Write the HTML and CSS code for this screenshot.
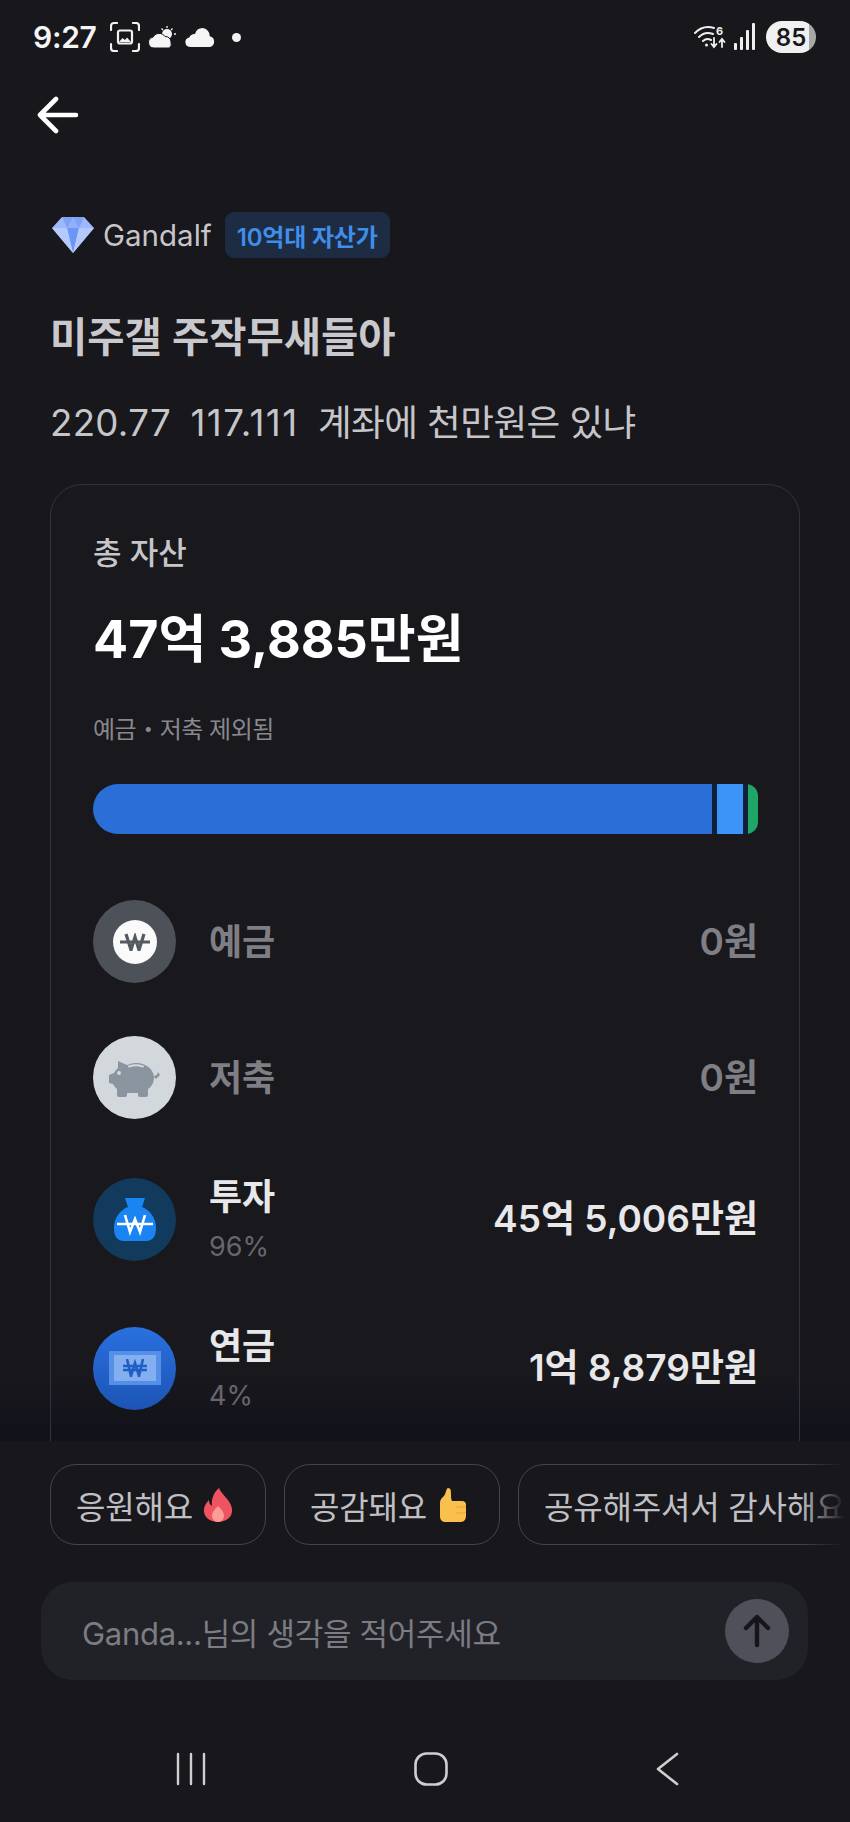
FILE: index.html
```html
<!DOCTYPE html>
<html lang="ko">
<head>
<meta charset="utf-8">
<title>Gandalf</title>
<link rel="stylesheet" href="styles.css">
</head>
<body>
<div class="screen">
  <div class="status">
    <div class="status-left">
      <span class="time">9:27</span>
      <svg class="st-shot" viewBox="0 0 30 30" width="30" height="30" fill="none" stroke="#f2f2f2" stroke-width="2.200" stroke-linecap="round"><path d="M1 8V4a3 3 0 0 1 3-3h3M23 1h3a3 3 0 0 1 3 3v4M29 22v4a3 3 0 0 1-3 3h-3M7 29H4a3 3 0 0 1-3-3v-4"/><rect x="8" y="8.500" width="14" height="13" rx="2"/><path d="M9 20l3.500-4 2.500 2 2-2.500 4 4.500z" fill="#f2f2f2" stroke="none"/></svg>
      <svg class="st-sun" viewBox="0 0 28 24" width="28" height="24" fill="#f5f5f5"><circle cx="19" cy="9" r="5"/><path d="M19 1v2M26 9h2M24.500 3.500l-1.500 1.500M13.500 3.500l1.500 1.500" stroke="#f5f5f5" stroke-width="1.300"/><path d="M6 23a5.500 5.500 0 0 1-1-10.900A7 7 0 0 1 17 11.500a5.500 5.500 0 0 1 6 5.700A5.600 5.600 0 0 1 21.500 23z" stroke="#17171c" stroke-width="1"/></svg>
      <svg class="st-cloud" viewBox="0 0 30 20" width="30" height="20" fill="#f5f5f5"><path d="M5 20a4.800 4.800 0 0 1-.8-9.500A6 6 0 0 1 10 7 8 8 0 0 1 17.500 1 8 8 0 0 1 24.800 9.300 5.500 5.500 0 0 1 25 20z"/></svg>
      <span class="st-dot"></span>
    </div>
    <div class="status-right">
      <svg class="st-wifi" viewBox="0 0 32 26" width="32" height="26" fill="none" stroke="#eee" stroke-width="2" stroke-linecap="round"><path d="M1 9a19 19 0 0 1 19-5M5 13a13 13 0 0 1 14-3M9 17a7 7 0 0 1 8-1"/><circle cx="12.500" cy="21" r="1.500" fill="#eee" stroke="none"/><path d="M20 14v8M17.500 20l2.500 3 2.500-3M28 23v-7M25.500 18l2.500-3 2.500 3" stroke-width="1.800"/><text x="22" y="11" class="wifi-six">6</text></svg>
      <svg class="st-signal" viewBox="0 0 22 30" width="22" height="30" fill="#eee"><rect x="0" y="21" width="3" height="7" rx="1"/><rect x="6" y="15" width="3" height="13" rx="1"/><rect x="12" y="8" width="3" height="20" rx="1"/><rect x="18" y="1" width="3" height="27" rx="1"/></svg>
      <span class="battery">85</span>
    </div>
  </div>

  <div class="topbar">
    <svg class="back" viewBox="0 0 42 38" width="42" height="38" fill="none" stroke="#fff" stroke-width="4.600" stroke-linecap="round" stroke-linejoin="round"><path d="M3 19h36M19 3L3 19l16 16"/></svg>
  </div>

  <div class="scroll">
    <div class="author">
      <svg class="gem" viewBox="0 0 42 36" width="42" height="36"><path d="M10 0h22l10 11-21 25L0 11z" fill="#9db8fb"/><path d="M10 0h22l-5 11H15z" fill="#7ea2f7"/><path d="M15 11h12L21 36z" fill="#6a96f7"/><path d="M0 11h15l6 25z" fill="#b4cafd"/><path d="M42 11H27l-6 25z" fill="#b4cafd"/><path d="M21 0l6 11H15z" fill="#92b0f9"/></svg>
      <span class="author-name">Gandalf</span>
      <span class="badge">10억대 자산가</span>
    </div>
    <h1 class="title">미주갤 주작무새들아</h1>
    <p class="body-text"><span class="num-a">220.77</span>&nbsp; <span class="num-b">117.111</span>&nbsp; 계좌에 천만원은 있냐</p>

    <section class="card">
      <div class="card-label">총 자산</div>
      <div class="card-total">47억 3,885만원</div>
      <div class="card-note">예금・저축 제외됨</div>
      <div class="bar">
        <span class="seg seg-a"></span>
        <span class="seg seg-b"></span>
        <span class="seg seg-c"></span>
      </div>

      <div class="row row-muted row-first">
        <span class="ico ico-grey"><span class="won-disc"><svg viewBox="0 0 30 18" width="30" height="18" fill="none" stroke="#555a61" stroke-width="3.200"><path d="M0 9h30M6 1l5 16 4-13 4 13 5-16"/></svg></span></span>
        <span class="row-main"><span class="row-name">예금</span></span>
        <span class="row-value">0원</span>
      </div>
      <div class="row row-muted row-second">
        <span class="ico ico-light"><svg viewBox="0 0 52 40" width="52" height="40"><path d="M9 3l9 4a22 22 0 0 1 9-2c11 0 18 7 18 15 0 5-3 9-6 11v6a2 2 0 0 1-2 2h-6a2 2 0 0 1-2-2v-2H18v2a2 2 0 0 1-2 2h-6a2 2 0 0 1-2-2v-6c-2-2-3-3-4-5l-4-1v-8l5-2c1-2 2-3 4-5z" fill="#8b959f"/><path d="M20 8.500c4-1.500 10-1.500 14 0" stroke="#d4d9de" stroke-width="2" fill="none" stroke-linecap="round"/><path d="M44 18c3 0 4-1 5-4l2 3-4 4z" fill="#8b959f"/><circle cx="10" cy="15" r="2" fill="#d4d9de"/></svg></span>
        <span class="row-main"><span class="row-name">저축</span></span>
        <span class="row-value">0원</span>
      </div>
      <div class="row row-third">
        <span class="ico ico-navy"><svg viewBox="0 0 44 44" width="44" height="44"><path d="M12 1h20l-3 9c8 3 14 11 14 21 0 8-3 13-10 13H11C4 44 1 39 1 31 1 21 7 13 15 10z" fill="#1a85f2"/><path d="M4 27h36M12 18l5 17 5-13 5 13 5-17" fill="none" stroke="#fff" stroke-width="2.600"/></svg></span>
        <span class="row-main"><span class="row-name">투자</span><span class="row-pct">96%</span></span>
        <span class="row-value">45억 5,006만원</span>
      </div>
      <div class="row row-fourth">
        <span class="ico ico-blue"><span class="note"><span class="note-in"><svg viewBox="0 0 24 18" width="24" height="18" fill="none" stroke="#1f5fc4" stroke-width="2.600"><path d="M0 7h24M0 11h24M4 0l4 17 4-13 4 13 4-17"/></svg></span></span></span>
        <span class="row-main"><span class="row-name">연금</span><span class="row-pct">4%</span></span>
        <span class="row-value">1억 8,879만원</span>
      </div>
    </section>
  </div>

  <div class="panel">
    <div class="chips">
      <span class="chip">응원해요 <svg class="emoji" viewBox="0 0 30 34" width="30" height="34"><path d="M16 0c2 6 12 12 13 21 1 8-6 13-14 13S0 29 1 21c.5-4 3-7 5-9 0 3 1 5 3 6C8 11 11 4 16 0z" fill="#ef5361"/><path d="M15 18c3 3 6 6 6 10 0 3-3 6-6 6s-6-3-6-6c0-4 3-7 6-10z" fill="#fb9d96"/></svg></span>
      <span class="chip">공감돼요 <svg class="emoji" viewBox="0 0 30 34" width="30" height="34"><path d="M11 0c3 0 3 3 3 6 0 3 0 5 1 7h10c3 0 4 2 4 4v11c0 3-2 6-5 6H9c-4 0-6-2-6-6V15c0-3 1-4 3-6 3-2 3-9 5-9z" fill="#f9c04e"/><path d="M19 19h10M19 25h10" stroke="#e6a835" stroke-width="1"/></svg></span>
      <span class="chip chip-cut">공유해주셔서 감사해요</span>
      <span class="chips-fade"></span>
    </div>
    <div class="composer">
      <span class="placeholder">Ganda...님의 생각을 적어주세요</span>
      <span class="send"><svg viewBox="0 0 32 34" width="32" height="34" fill="none" stroke="#15151a" stroke-width="4.400" stroke-linecap="round" stroke-linejoin="round"><path d="M16 31V3M5 14L16 3l11 11"/></svg></span>
    </div>
  </div>

  <div class="navbar">
    <svg viewBox="0 0 30 34" width="30" height="34" fill="none" stroke="#cfcfd2" stroke-width="2.400" stroke-linecap="round"><path d="M2 2v30M15 2v30M28 2v30"/></svg>
    <svg viewBox="0 0 34 34" width="34" height="34" fill="none" stroke="#cfcfd2" stroke-width="2.600"><rect x="1.500" y="1.500" width="31" height="31" rx="11"/></svg>
    <svg viewBox="0 0 24 34" width="24" height="34" fill="none" stroke="#cfcfd2" stroke-width="2.600" stroke-linecap="round" stroke-linejoin="round"><path d="M21 2L2 17l19 15"/></svg>
  </div>
</div>
</body>
</html>
```
FILE: styles.css
```css
* { box-sizing: border-box; }
html, body { margin: 0; padding: 0; background: #17171c; }
body { font-family: "Inter", "Noto Sans CJK KR", "Noto Sans", sans-serif; color: #fff; }
.screen { width: 850px; height: 1822px; display: flex; flex-direction: column; overflow: hidden; background: #17171c; }

.status { height: 74px; flex: none; display: flex; justify-content: space-between; align-items: center; padding: 0 34px 0 33px; }
.status-left, .status-right { display: flex; align-items: center; }
.time { font-size: 30px; font-weight: 600; color: #f5f5f5; letter-spacing: -0.3px; }
.st-shot { margin-left: 13px; }
.st-sun { margin-left: 8px; }
.st-cloud { margin-left: 9px; }
.st-dot { width: 9px; height: 9px; margin-left: 17px; border-radius: 50%; background: #f2f2f2; }
.st-signal { margin-left: 8px; }
.wifi-six { font-size: 11px; font-weight: 700; fill: #eee; stroke: none; }
.battery { margin-left: 10px; width: 50px; height: 32px; border-radius: 16px; background: linear-gradient(90deg, #f0f0f0 86%, #a8a8a8 86%); color: #18181c; font-size: 24px; font-weight: 600; display: flex; align-items: center; justify-content: center; }

.topbar { height: 62px; flex: none; padding: 22px 0 0 37px; }
.back { display: block; }

.scroll { flex: 1; min-height: 0; overflow: hidden; padding: 76px 50px 0; display: flex; flex-direction: column; background: linear-gradient(180deg, #17171c calc(100% - 60px), #11121a); }
.author { display: flex; align-items: center; height: 46px; padding-left: 2px; }
.author-name { margin-left: 9px; font-size: 29.500px; color: #c6c6ca; }
.badge { margin-left: 13px; height: 46px; padding: 0 12px; display: flex; align-items: center; border-radius: 9px; background: #1d2c42; color: #3f8eea; font-size: 24px; font-weight: 600; letter-spacing: -0.2px; }
.title { margin: 55px 0 0; font-size: 40.500px; line-height: 50px; font-weight: 600; color: #c9c9cd; letter-spacing: 0; }
.body-text { margin: 36px 0 0; font-size: 36.700px; line-height: 48px; color: #c6c6ca; letter-spacing: -0.6px; }
.num-a { letter-spacing: 0.300px; }
.num-b { letter-spacing: 1.400px; }

.card { flex: none; margin-top: 37px; height: 1000px; padding: 48px 41px 0 42px; border: 1px solid #33333b; border-radius: 32px; background: linear-gradient(180deg, #18181d 890px, #11121a 957px); }
.card-label { font-size: 31px; line-height: 40px; font-weight: 500; color: #c6c6ca; }
.card-total { margin-top: 34px; font-size: 52px; line-height: 66px; font-weight: 700; color: #fff; }
.card-note { margin-top: 41px; font-size: 24px; line-height: 32px; color: #88888e; letter-spacing: -0.5px; }
.bar { margin-top: 38px; height: 50px; display: flex; gap: 5px; border-radius: 25px 12px 12px 25px; overflow: hidden; background: #10203a; }
.seg { display: block; height: 100%; }
.seg-a { width: 619px; background: #2a6ed8; }
.seg-b { width: 26px; background: #3d94f8; }
.seg-c { width: 10px; background: #1fa565; }

.row { display: flex; align-items: center; }
.row-first { margin-top: 66px; }
.row-second { margin-top: 53px; }
.row-third { margin-top: 55px; }
.row-fourth { margin-top: 59px; }
.row-main { margin-left: 33px; display: flex; flex-direction: column; }
.row-name { font-size: 36px; line-height: 46px; font-weight: 600; color: #e8e8ea; }
.row-pct { margin-top: 10px; font-size: 27px; line-height: 34px; color: #66666c; }
.row-value { margin-left: auto; font-size: 37px; line-height: 46px; font-weight: 600; color: #e8e8ea; }
.row-muted .row-name, .row-muted .row-value { color: #7e7e84; }
.ico { flex: none; width: 83px; height: 83px; border-radius: 50%; display: flex; align-items: center; justify-content: center; }
.ico-grey { background: #4d5158; }
.ico-light { background: #d3d8dd; }
.ico-navy { background: #123a5c; }
.ico-blue { background: linear-gradient(180deg, #2a70e0, #1c54b4); }
.won-disc { width: 44px; height: 44px; border-radius: 50%; background: #fafafa; display: flex; align-items: center; justify-content: center; }
.note { width: 52px; height: 34px; background: #558fe6; display: flex; align-items: center; justify-content: center; }
.note-in { width: 42px; height: 26px; background: #83aff0; display: flex; align-items: center; justify-content: center; }

.panel { flex: none; height: 260px; background: #17171c; display: flex; flex-direction: column; }
.chips { position: relative; margin-top: 23px; padding-left: 50px; display: flex; gap: 18px; overflow: hidden; white-space: nowrap; }
.chip { flex: none; height: 81px; width: 216px; padding: 0 0 0 25px; display: inline-flex; align-items: center; gap: 10px; border: 1px solid #44444b; border-radius: 26px; font-size: 32px; letter-spacing: -0.2px; color: #c0c0c4; }
.chip-cut { width: 360px; }
.emoji { flex: none; }
.chips-fade { position: absolute; top: 0; right: 0; bottom: 0; width: 50px; background: linear-gradient(90deg, rgba(23,23,28,0), #17171c 90%); }
.composer { margin: 37px 42px 0 41px; height: 98px; padding: 0 19px 0 41px; display: flex; align-items: center; justify-content: space-between; border-radius: 32px; background: #212228; }
.placeholder { font-size: 31px; color: #7c7c82; letter-spacing: -0.3px; }
.send { width: 64px; height: 64px; border-radius: 50%; background: #50505a; display: flex; align-items: center; justify-content: center; }

.navbar { flex: none; height: 121px; display: grid; grid-template-columns: 30px 34px 24px; justify-content: space-between; padding: 51px 170px 0 176px; align-items: start; }
.navbar svg { display: block; }
```
